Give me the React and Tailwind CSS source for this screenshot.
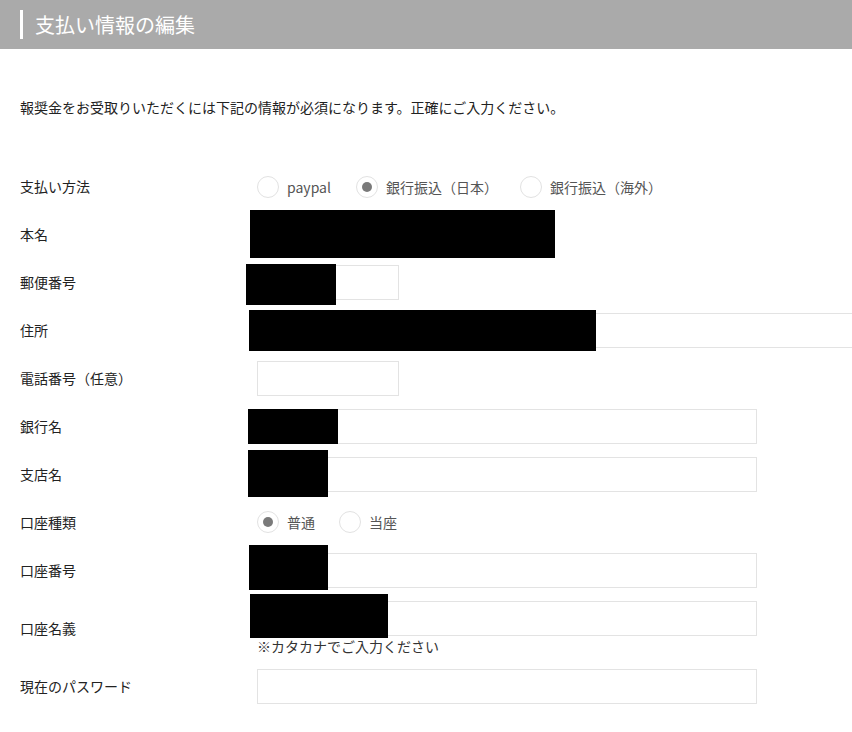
import React from "react";

const font = { fontFamily: '"Noto Sans CJK JP", "Noto Sans", sans-serif' };

function Radio({ checked, label, className = "" }) {
  return (
    <label className={`flex items-center gap-[8px] text-[14px] text-[#555] ${className}`}>
      <span className="flex h-[22px] w-[22px] items-center justify-center rounded-full border border-[#e2e2e2] bg-white">
        {checked && <span className="h-[10px] w-[10px] rounded-full bg-[#7a7a7a]" />}
      </span>
      <span>{label}</span>
    </label>
  );
}

function Input({ className = "" }) {
  return <div className={`h-[35px] border border-[#e3e3e3] bg-white ${className}`} />;
}

function Mask({ className }) {
  return <div className={`absolute bg-black ${className}`} />;
}

function Row({ label, children, className = "h-12" }) {
  return (
    <div className={`flex items-center ${className}`}>
      <div className="w-[237px] shrink-0 text-[14px] text-[#222]">{label}</div>
      <div className="relative flex h-full flex-1 flex-col justify-center">{children}</div>
    </div>
  );
}

export default function App() {
  return (
    <div className="w-[852px] min-h-[732px] overflow-hidden bg-white" style={font}>
      <header className="flex h-[49px] items-center bg-[#aaaaaa] pl-[20px]">
        <span className="h-[29px] w-[3px] bg-white" />
        <h1 className="ml-[12px] text-[20px] leading-none text-white">支払い情報の編集</h1>
      </header>

      <div className="px-[20px]">
        <p className="mt-[48px] text-[14px] leading-[20px] text-[#222]">
          報奨金をお受取りいただくには下記の情報が必須になります。正確にご入力ください。
        </p>

        <div className="mt-[45px]">
          <Row label="支払い方法">
            <div className="flex items-center pt-[2px]">
              <Radio label="paypal" />
              <Radio checked label="銀行振込（日本）" className="ml-[25px]" />
              <Radio label="銀行振込（海外）" className="ml-[22px]" />
            </div>
          </Row>

          <Row label="本名">
            <Mask className="left-[-7px] top-0 h-[48px] w-[305px]" />
          </Row>

          <Row label="郵便番号">
            <Input className="w-[142px]" />
            <Mask className="left-[-11px] top-[6px] h-[41px] w-[90px]" />
          </Row>

          <Row label="住所">
            <Input className="w-[640px]" />
            <Mask className="left-[-8px] top-[4px] h-[41px] w-[347px]" />
          </Row>

          <Row label="電話番号（任意）">
            <Input className="w-[142px]" />
          </Row>

          <Row label="銀行名">
            <Input className="w-[500px]" />
            <Mask className="left-[-9px] top-[7px] h-[35px] w-[90px]" />
          </Row>

          <Row label="支店名">
            <Input className="w-[500px]" />
            <Mask className="left-[-9px] top-0 h-[47px] w-[80px]" />
          </Row>

          <Row label="口座種類">
            <div className="flex items-center">
              <Radio checked label="普通" />
              <Radio label="当座" className="ml-[24px]" />
            </div>
          </Row>

          <Row label="口座番号">
            <Input className="w-[500px]" />
            <Mask className="left-[-8px] top-[-1px] h-[45px] w-[79px]" />
          </Row>

          <Row label="口座名義" className="h-[68px]">
            <div className="flex h-full flex-col justify-start pt-[7px]">
              <Input className="w-[500px]" />
              <p className="text-[14px] leading-[20px] text-[#333]">※カタカナでご入力ください</p>
            </div>
            <Mask className="left-[-7px] top-0 h-[44px] w-[138px]" />
          </Row>

          <Row label="現在のパスワード">
            <Input className="w-[500px]" />
          </Row>
        </div>
      </div>
    </div>
  );
}
